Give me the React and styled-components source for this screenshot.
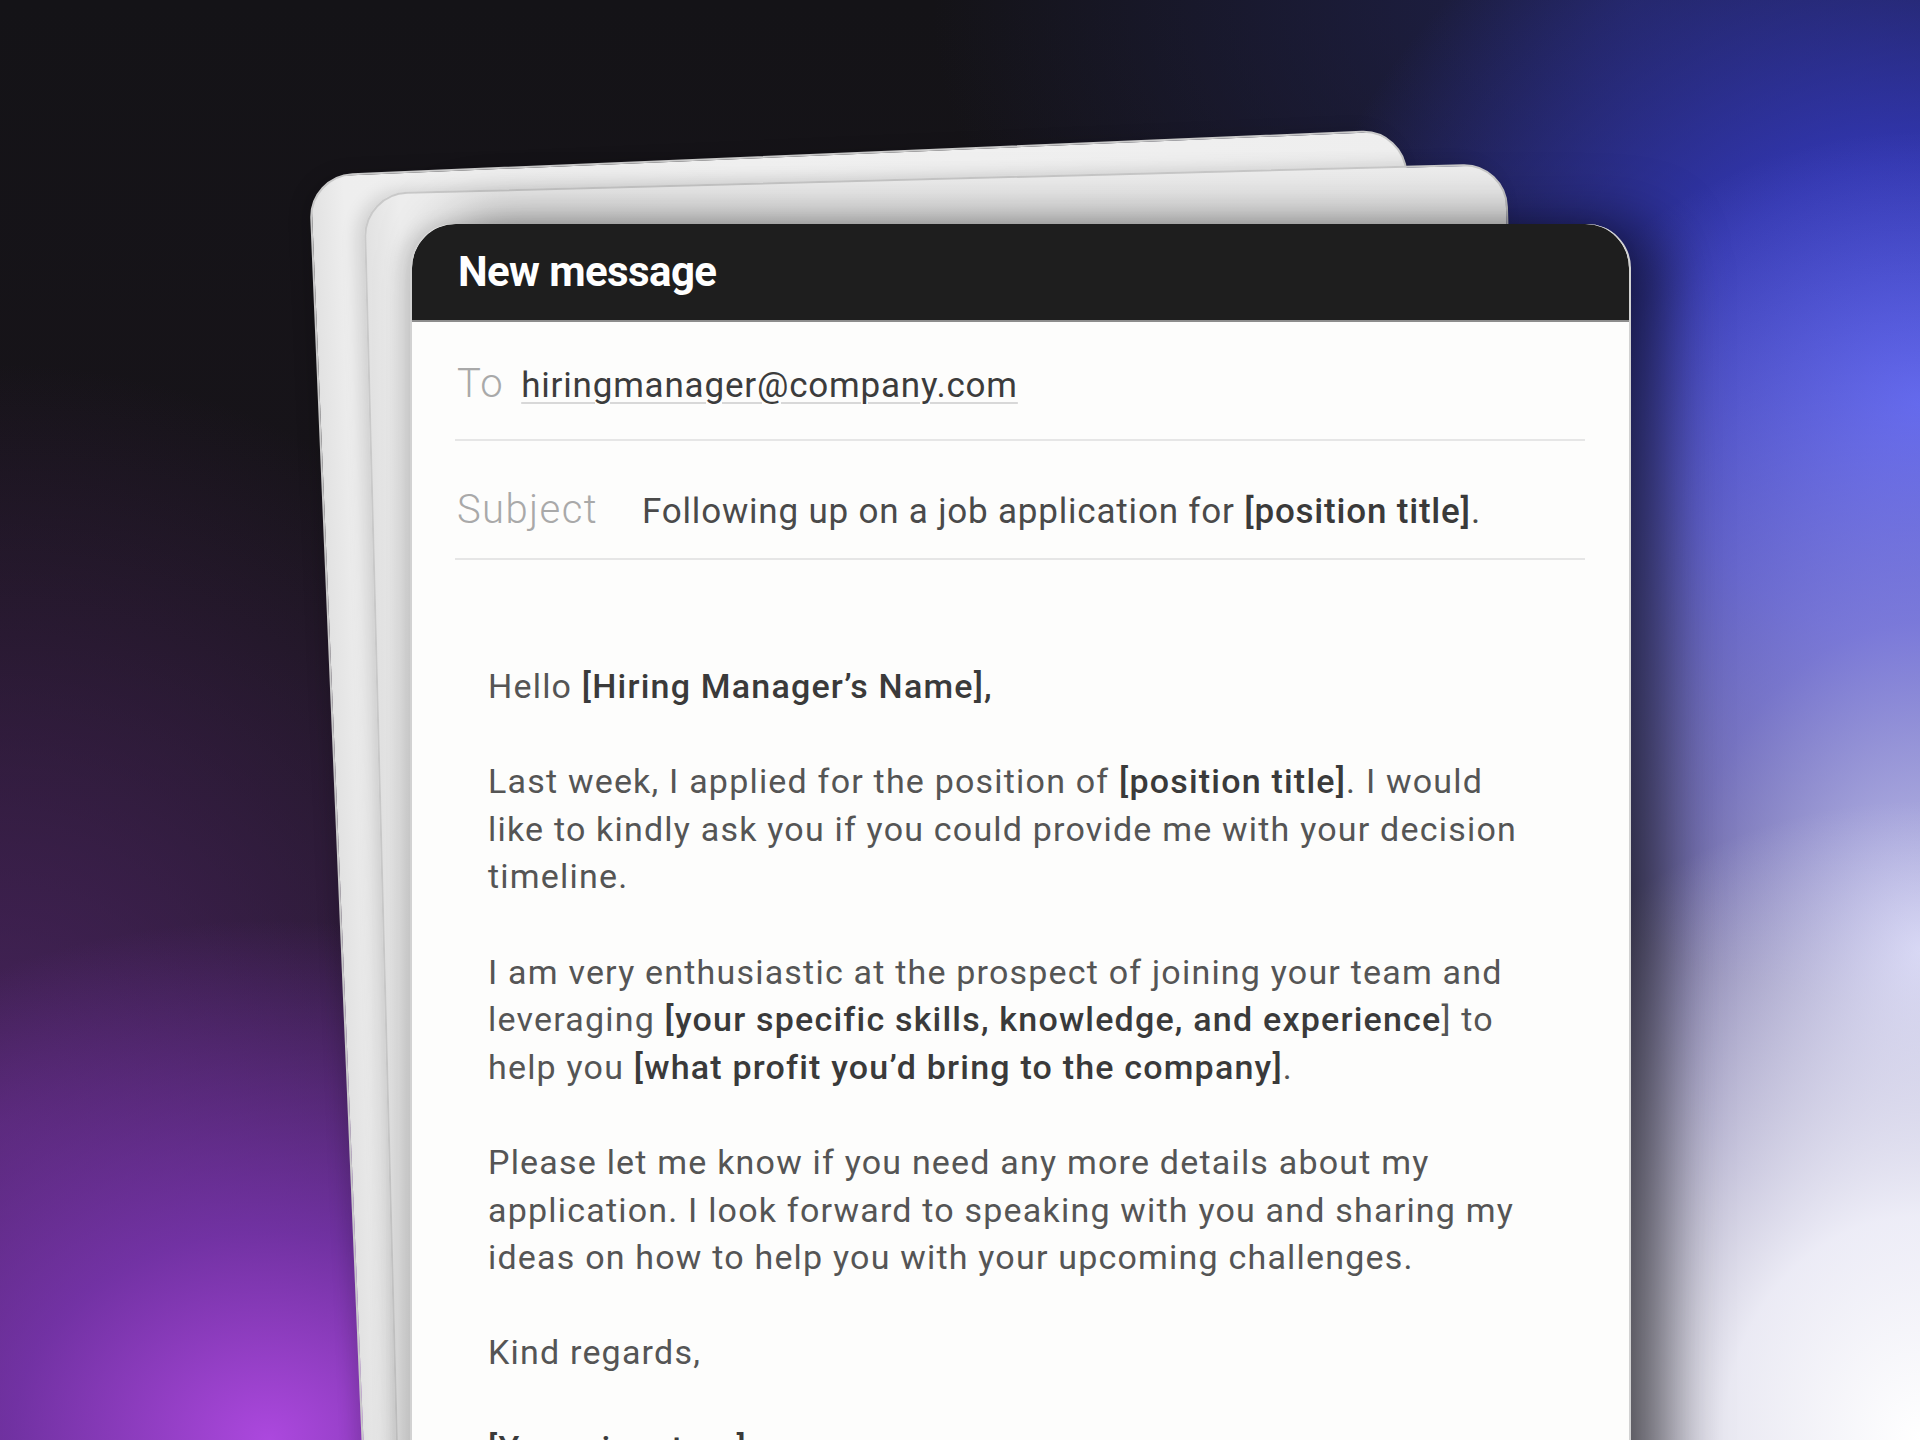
import React from "react";
import styled, { createGlobalStyle } from "styled-components";

const Global = createGlobalStyle`
  html, body { margin: 0; padding: 0; background: #141317; }
  #root { width: 1920px; height: 1440px; }
`;

const Stage = styled.main`
  position: relative;
  width: 1920px;
  height: 1440px;
  overflow: hidden;
  box-sizing: border-box;
  padding: 224px 0 0 410px;
  font-family: Roboto, "Liberation Sans", Arial, sans-serif;
  background:
    radial-gradient(ellipse 560px 640px at 100% 100%, rgba(255,255,255,1) 0%, rgba(246,246,253,0.92) 35%, rgba(230,230,250,0) 100%),
    radial-gradient(ellipse 600px 820px at 100% 66%, rgba(210,210,250,0.95) 0%, rgba(170,165,245,0.6) 40%, rgba(150,140,240,0) 100%),
    radial-gradient(ellipse 640px 600px at 100% 28%, rgba(66,76,232,1) 0%, rgba(56,62,212,0.78) 40%, rgba(40,40,160,0) 100%),
    radial-gradient(ellipse 640px 520px at 14% 100%, rgba(172,72,222,1) 0%, rgba(132,56,192,0.75) 40%, rgba(90,40,140,0) 100%),
    radial-gradient(ellipse 700px 760px at 0% 78%, rgba(80,38,105,0.85) 0%, rgba(50,25,60,0) 100%),
    radial-gradient(ellipse 700px 500px at 85% 0%, rgba(32,34,82,0.9) 0%, rgba(30,30,60,0) 100%),
    linear-gradient(180deg, #141317 0%, #18141a 45%, #22182a 100%);
`;

const Sheet = styled.div`
  position: absolute;
  left: ${(p) => p.$left}px;
  top: ${(p) => p.$top}px;
  width: ${(p) => p.$w}px;
  height: 1500px;
  box-sizing: border-box;
  transform-origin: 50% 0;
  transform: rotate(${(p) => p.$deg}deg);
  border-radius: 44px;
  border: 2px solid #c9c9c9;
  background: linear-gradient(90deg, #e2e2e2 0%, #eeeeee 3%, #f1f1f1 40%, #eeeeee 100%);
  box-shadow: -6px 0 18px rgba(0, 0, 0, 0.14);
  z-index: ${(p) => p.$z};
`;

const Card = styled.section`
  position: relative;
  z-index: 3;
  width: 1221px;
  min-height: 1400px;
  box-sizing: border-box;
  border-radius: 44px 44px 0 0;
  border-left: 2px solid #d2d2d2;
  border-right: 2px solid #d2d2d2;
  background: #fdfdfc;
  box-shadow: 34px 0 60px rgba(0, 0, 0, 0.55), -8px 0 18px rgba(0, 0, 0, 0.12);
  overflow: hidden;
`;

const Header = styled.header`
  display: flex;
  align-items: center;
  height: 98px;
  box-sizing: border-box;
  padding-left: 46px;
  background: #1e1e1e;
  border-bottom: 2px solid #8d8d8d;
  border-radius: 44px 44px 0 0;
`;

const Title = styled.h1`
  margin: 0;
  color: #ffffff;
  font-size: 42px;
  font-weight: 700;
  letter-spacing: -0.6px;
  line-height: 1;
`;

const Fields = styled.div`
  padding: 0 44px 0 43px;
`;

const FieldRow = styled.div`
  display: flex;
  align-items: baseline;
  height: 119px;
  box-sizing: border-box;
  padding: ${(p) => p.$pt}px 0 0 2px;
  border-bottom: 2px solid #e6e6e6;
`;

const Label = styled.span`
  font-size: 40px;
  font-weight: 300;
  line-height: 1;
  letter-spacing: 1.4px;
  color: #a9a9a9;
  margin-right: ${(p) => p.$gap}px;
`;

const Email = styled.span`
  font-size: 35px;
  line-height: 1;
  letter-spacing: 0.8px;
  color: #3c3c3c;
  text-decoration: underline;
  text-decoration-color: #d8d8d8;
  text-decoration-thickness: 2px;
  text-underline-offset: 5px;
`;

const SubjectText = styled.span`
  font-size: 35px;
  line-height: 1;
  letter-spacing: 0.8px;
  color: #4a4a4a;
`;

const Body = styled.article`
  padding: 103px 0 0 76px;
  font-size: 34px;
  letter-spacing: 1.2px;
  line-height: 47.6px;
  color: #555555;
`;

const Para = styled.p`
  margin: 0 0 47.6px;
`;

const Line = styled.span`
  display: block;
  white-space: nowrap;
`;

const Strong = styled.span`
  font-weight: 500;
  color: #3a3a3a;
`;

export default function App() {
  return (
    <>
      <Global />
      <Stage>
        <Sheet $left={308} $top={152} $w={1098} $deg={-2.4} $z={1} />
        <Sheet $left={363} $top={178} $w={1144} $deg={-1.5} $z={2} />
        <Card>
          <Header>
            <Title>New message</Title>
          </Header>
          <Fields>
            <FieldRow $pt={42}>
              <Label $gap={17}>To</Label>
              <Email>hiringmanager@company.com</Email>
            </FieldRow>
            <FieldRow $pt={49}>
              <Label $gap={44}>Subject</Label>
              <SubjectText>
                Following up on a job application for <Strong>[position title]</Strong>.
              </SubjectText>
            </FieldRow>
          </Fields>
          <Body>
            <Para>
              <Line>
                Hello <Strong>[Hiring Manager’s Name],</Strong>
              </Line>
            </Para>
            <Para>
              <Line>
                Last week, I applied for the position of <Strong>[position title]</Strong>. I would
              </Line>
              <Line>like to kindly ask you if you could provide me with your decision</Line>
              <Line>timeline.</Line>
            </Para>
            <Para>
              <Line>I am very enthusiastic at the prospect of joining your team and</Line>
              <Line>
                leveraging <Strong>[your specific skills, knowledge, and experience</Strong>] to
              </Line>
              <Line>
                help you <Strong>[what profit you’d bring to the company]</Strong>.
              </Line>
            </Para>
            <Para>
              <Line>Please let me know if you need any more details about my</Line>
              <Line>application. I look forward to speaking with you and sharing my</Line>
              <Line>ideas on how to help you with your upcoming challenges.</Line>
            </Para>
            <Para>
              <Line>Kind regards,</Line>
            </Para>
            <Para>
              <Line>
                <Strong>[Your signature]</Strong>
              </Line>
            </Para>
          </Body>
        </Card>
      </Stage>
    </>
  );
}
